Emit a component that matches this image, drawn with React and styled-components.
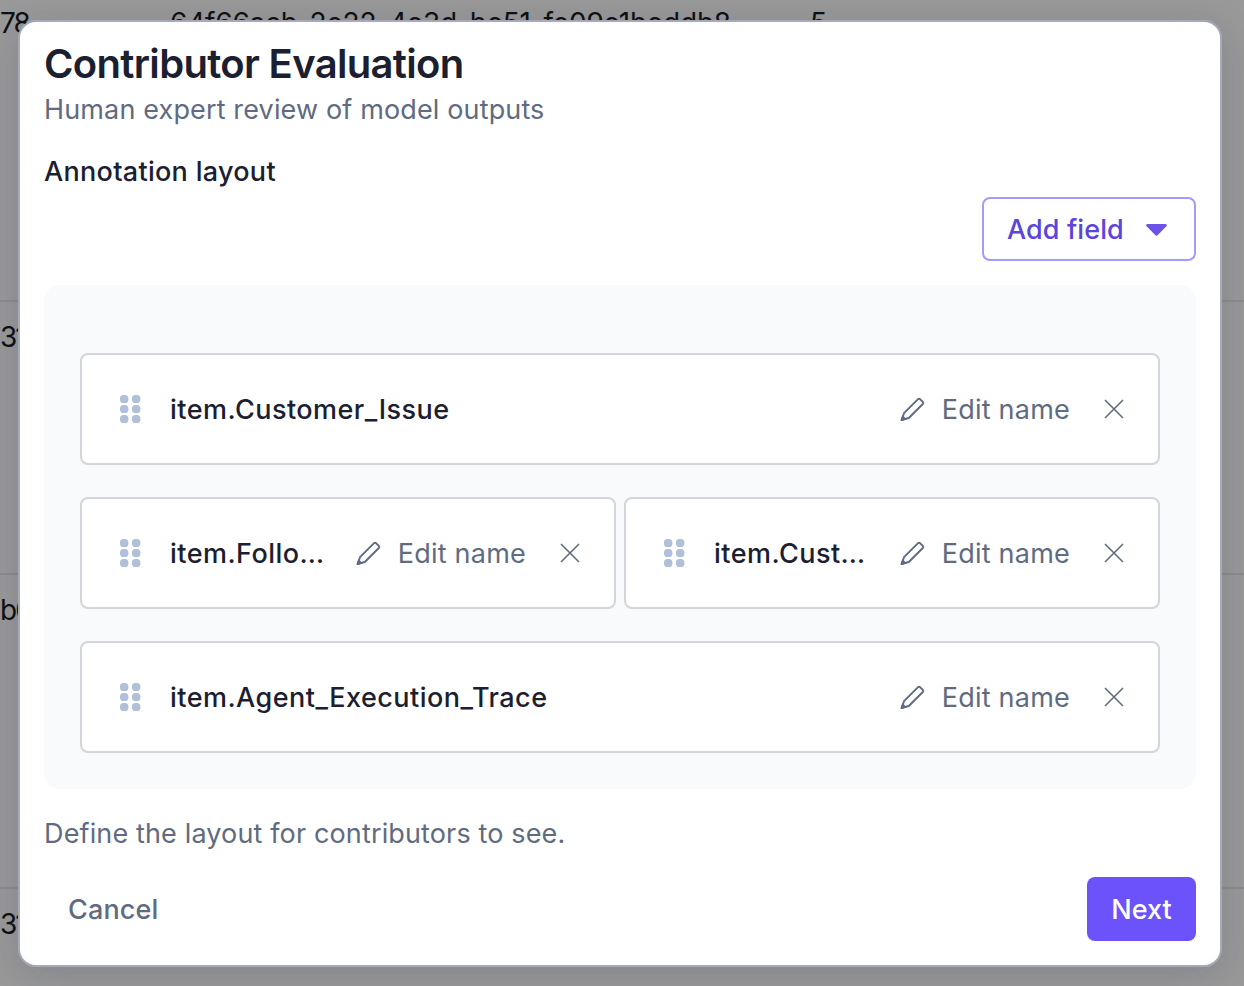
import React from "react";
import styled, { createGlobalStyle } from "styled-components";

const Global = createGlobalStyle`
  html, body { margin: 0; padding: 0; height: 100%; background: #fff; overflow: hidden; }
  body { font-family: Inter, "Liberation Sans", sans-serif; }
`;

const Page = styled.div`
  width: 1244px;
  height: 986px;
  overflow: hidden;
  position: relative;
  background: #fff;
`;

const Table = styled.div`
  display: flex;
  flex-direction: column;
  margin-top: -17px;
  font-size: 28px;
  line-height: 40px;
  letter-spacing: -0.2px;
  color: #1a1c20;
`;

const Row = styled.div`
  display: grid;
  grid-template-columns: 170px 640px 1fr;
  align-items: start;
  height: ${(p) => p.$h}px;
  box-sizing: border-box;
  padding-top: ${(p) => p.$pad}px;
  border-bottom: 2px solid #e9eaec;
  white-space: nowrap;
`;

const IdCell = styled.span`
  letter-spacing: -2px;
`;

const Overlay = styled.div`
  position: absolute;
  inset: 0;
  background: rgba(0, 0, 0, 0.4);
`;

const Modal = styled.div`
  position: absolute;
  left: 20px;
  top: 22px;
  width: 1200px;
  height: 943px;
  box-sizing: border-box;
  padding: 20px 24px 24px 24px;
  background: #fff;
  border-radius: 16px;
  box-shadow: 0 0 0 2px #a5a9b8, 0 8px 40px rgba(20, 25, 70, 0.18);
  display: flex;
  flex-direction: column;
`;

const Title = styled.h2`
  margin: 0;
  font-size: 40px;
  line-height: 44px;
  font-weight: 600;
  letter-spacing: -0.67px;
  color: #1a2030;
`;

const Subtitle = styled.p`
  margin: 4px 0 0;
  font-size: 27px;
  line-height: 40px;
  letter-spacing: 0.14px;
  color: #5f6b80;
`;

const SectionLabel = styled.div`
  margin-top: 24px;
  font-size: 27px;
  line-height: 36px;
  font-weight: 500;
  letter-spacing: 0.3px;
  color: #1a2030;
`;

const ToolRow = styled.div`
  display: flex;
  justify-content: flex-end;
  margin-top: 7px;
`;

const AddButton = styled.button`
  width: 214px;
  height: 64px;
  box-sizing: border-box;
  border: 2px solid #a29bfc;
  border-radius: 8px;
  background: #fff;
  color: #5b45dc;
  font: 500 27px Inter, sans-serif;
  letter-spacing: 0.1px;
  display: flex;
  align-items: center;
  justify-content: space-between;
  padding: 0 27px 0 23px;
`;

const Canvas = styled.div`
  margin-top: 24px;
  height: 504px;
  box-sizing: border-box;
  padding: 68px 36px 36px;
  background: #f9fafb;
  border-radius: 16px;
  display: flex;
  flex-direction: column;
  gap: 32px;
`;

const FieldRow = styled.div`
  display: flex;
  gap: 8px;
`;

const Field = styled.div`
  flex: 1 1 0;
  min-width: 0;
  height: 112px;
  box-sizing: border-box;
  border: 2px solid #d3d5da;
  border-radius: 8px;
  background: #fff;
  display: flex;
  align-items: center;
  padding: 0 34px 0 37px;
`;

const Grip = styled.svg`
  width: 22px;
  height: 30px;
  flex: none;
  fill: #b1bfd8;
`;

const FieldName = styled.span`
  flex: 1;
  min-width: 0;
  margin: 2px 0 0 29px;
  font-size: 27px;
  line-height: 40px;
  font-weight: 500;
  letter-spacing: 0.47px;
  color: #1a2030;
  white-space: nowrap;
`;

const EditName = styled.span`
  flex: none;
  margin-left: 32px;
  display: flex;
  align-items: center;
  gap: 16px;
  font-size: 27px;
  letter-spacing: 0.22px;
  color: #5f6b80;
`;

const Close = styled.svg`
  flex: none;
  width: 20px;
  height: 20px;
  margin-left: 34px;
  stroke: #5f6b80;
  stroke-width: 1.6;
  fill: none;
`;

const Hint = styled.p`
  margin: 25px 0 0;
  font-size: 27px;
  line-height: 40px;
  letter-spacing: 0.14px;
  color: #5f6b80;
`;

const Footer = styled.div`
  margin-top: auto;
  display: flex;
  justify-content: space-between;
  align-items: center;
`;

const CancelButton = styled.button`
  height: 64px;
  padding: 0 24px;
  border: 0;
  background: transparent;
  color: #5f6b80;
  font: 500 27px Inter, sans-serif;
  letter-spacing: 0.15px;
`;

const NextButton = styled.button`
  width: 109px;
  height: 64px;
  border: 0;
  border-radius: 8px;
  background: #6c52fb;
  color: #fff;
  font: 500 27px Inter, sans-serif;
`;

const GripIcon = () => (
  <Grip viewBox="0 0 22 30">
    {[0, 1, 2].flatMap((r) =>
      [0, 1].map((c) => <rect key={`${r}${c}`} x={1 + c * 12} y={1 + r * 10} width="8.4" height="8" rx="3.6" />)
    )}
  </Grip>
);

const Pencil = () => (
  <svg width="26" height="26" viewBox="0 0 26 26" fill="none" stroke="#5f6b80" strokeWidth="1.9" strokeLinejoin="round" strokeLinecap="round">
    <path d="M1.6 24 4 17.2 18 3.2a1.5 1.5 0 0 1 2.1 0l2.7 2.7a1.5 1.5 0 0 1 0 2.1L8.8 22Z" />
    <path d="M1.6 24 5 22.8 2.8 20.6Z" fill="#5f6b80" />
  </svg>
);

const FieldItem = ({ name }) => (
  <Field>
    <GripIcon />
    <FieldName>{name}</FieldName>
    <EditName><Pencil />Edit name</EditName>
    <Close viewBox="0 0 20 20"><path d="M1 1l18 18M19 1 1 19" /></Close>
  </Field>
);

export default function App() {
  return (
    <Page>
      <Global />
      <Table>
        <Row $h={319} $pad={20}><IdCell>78</IdCell><span>64f66acb-2e22-4e3d-be51-fe09e1beddb8</span><span>5</span></Row>
        <Row $h={273} $pad={15}><IdCell>31</IdCell><span /><span /></Row>
        <Row $h={314} $pad={15}><IdCell>b0</IdCell><span /><span /></Row>
        <Row $h={200} $pad={15}><IdCell>31</IdCell><span /><span /></Row>
      </Table>
      <Overlay />
      <Modal>
        <Title>Contributor Evaluation</Title>
        <Subtitle>Human expert review of model outputs</Subtitle>
        <SectionLabel>Annotation layout</SectionLabel>
        <ToolRow>
          <AddButton>
            Add field
            <svg width="21" height="13" viewBox="0 0 21 13"><path d="M1.6 1h17.8a1.3 1.3 0 0 1 1 2.2l-8.6 8.9a1.8 1.8 0 0 1-2.6 0L.6 3.2a1.3 1.3 0 0 1 1-2.2Z" fill="#6c52e8" /></svg>
          </AddButton>
        </ToolRow>
        <Canvas>
          <FieldRow><FieldItem name="item.Customer_Issue" /></FieldRow>
          <FieldRow>
            <FieldItem name="item.Follo…" />
            <FieldItem name="item.Cust…" />
          </FieldRow>
          <FieldRow><FieldItem name="item.Agent_Execution_Trace" /></FieldRow>
        </Canvas>
        <Hint>Define the layout for contributors to see.</Hint>
        <Footer>
          <CancelButton>Cancel</CancelButton>
          <NextButton>Next</NextButton>
        </Footer>
      </Modal>
    </Page>
  );
}
